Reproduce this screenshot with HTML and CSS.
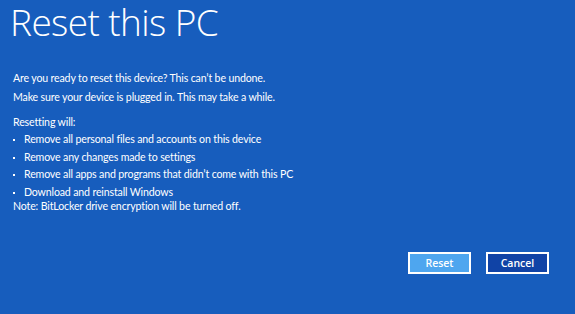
FILE: index.html
```html
<!DOCTYPE html>
<html lang="en">
<head>
<meta charset="utf-8">
<title>Reset this PC</title>
<link rel="stylesheet" href="styles.css">
</head>
<body>
<main class="page">
  <h1 class="title">Reset this PC</h1>
  <section class="intro">
    <p>Are you ready to reset this device? This can’t be undone.</p>
    <p>Make sure your device is plugged in. This may take a while.</p>
  </section>
  <section class="details">
    <p class="lead">Resetting will:</p>
    <ul class="list">
      <li>Remove all personal files and accounts on this device</li>
      <li>Remove any changes made to settings</li>
      <li>Remove all apps and programs that didn’t come with this PC</li>
      <li>Download and reinstall Windows</li>
    </ul>
    <p class="note">Note: BitLocker drive encryption will be turned off.</p>
  </section>
  <div class="actions">
    <button class="btn btn-primary">Reset</button>
    <button class="btn btn-secondary">Cancel</button>
  </div>
</main>
</body>
</html>
```

FILE: styles.css
```css
html, body {
  margin: 0;
  padding: 0;
  height: 100%;
}
body {
  background: #175dbd;
  color: #ffffff;
  font-family: "Lato", "Open Sans", sans-serif;
  overflow: hidden;
}
.page {
  display: flex;
  flex-direction: column;
  height: 314px;
  box-sizing: border-box;
  padding: 0 0 0 13px;
}
.title {
  margin: 0 0 0 -3px;
  font-family: "Open Sans", "Noto Sans", sans-serif;
  font-weight: 300;
  font-size: 37px;
  line-height: 44px;
  letter-spacing: -0.6px;
}
.intro {
  margin-top: 25px;
}
.intro p, .details p {
  margin: 0;
}
.intro p,
.details {
  font-size: 10.6px;
  letter-spacing: -0.15px;
}
.intro p {
  line-height: 19px;
}
.details {
  margin-top: 6px;
}
.lead {
  line-height: 18px;
}
.list {
  list-style: none;
  margin: 0;
  padding: 0;
}
.list li {
  position: relative;
  padding-left: 11px;
  line-height: 17.7px;
}
.list li::before {
  content: "";
  position: absolute;
  left: 0;
  top: 8px;
  width: 2px;
  height: 2px;
  background: #ffffff;
}
.note {
  line-height: 13px;
  margin-top: -2px !important;
}
.actions {
  display: flex;
  justify-content: flex-end;
  gap: 15px;
  margin-top: 39px;
  padding-right: 26px;
}
.btn {
  width: 63px;
  height: 22px;
  box-sizing: border-box;
  border: 2px solid #ffffff;
  color: #ffffff;
  font-family: "Open Sans", "Noto Sans", sans-serif;
  font-size: 10.5px;
  font-weight: 600;
  padding: 0;
}
.btn-primary {
  background: #4ea6ef;
}
.btn-secondary {
  background: #1043a6;
}
```
